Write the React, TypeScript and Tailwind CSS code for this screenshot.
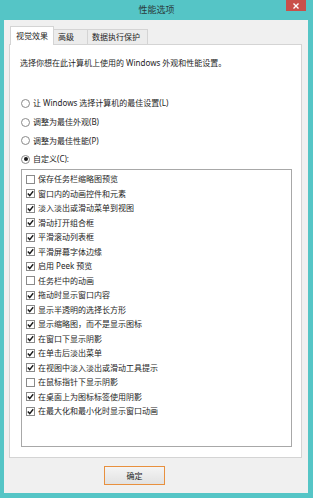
import React from "react";

const font = { fontFamily: '"Noto Sans", "Noto Sans CJK SC", sans-serif' };

const rows: [boolean, string][] = [
  [false, "保存任务栏缩略图预览"],
  [true, "窗口内的动画控件和元素"],
  [true, "淡入淡出或滑动菜单到视图"],
  [true, "滑动打开组合框"],
  [true, "平滑滚动列表框"],
  [true, "平滑屏幕字体边缘"],
  [true, "启用 Peek 预览"],
  [false, "任务栏中的动画"],
  [true, "拖动时显示窗口内容"],
  [true, "显示半透明的选择长方形"],
  [true, "显示缩略图，而不是显示图标"],
  [true, "在窗口下显示阴影"],
  [true, "在单击后淡出菜单"],
  [true, "在视图中淡入淡出或滑动工具提示"],
  [false, "在鼠标指针下显示阴影"],
  [true, "在桌面上为图标标签使用阴影"],
  [true, "在最大化和最小化时显示窗口动画"],
];

const radios: [boolean, string][] = [
  [false, "让 Windows 选择计算机的最佳设置(L)"],
  [false, "调整为最佳外观(B)"],
  [false, "调整为最佳性能(P)"],
  [true, "自定义(C):"],
];

function Check({ checked }: { checked: boolean }) {
  return (
    <div className="w-[9px] h-[9px] border border-[#8a8a8a] bg-white flex items-center justify-center shrink-0">
      {checked && (
        <svg width="7" height="7" viewBox="0 0 7 7">
          <path d="M0.8 3.6 L2.7 5.6 L6.2 1.2" fill="none" stroke="#1a1a1a" strokeWidth="1.4" />
        </svg>
      )}
    </div>
  );
}

function Radio({ checked }: { checked: boolean }) {
  return (
    <div className="w-[9px] h-[9px] rounded-full border border-[#8a8a8a] bg-white flex items-center justify-center shrink-0">
      {checked && <div className="w-[4px] h-[4px] rounded-full bg-[#1a1a1a]" />}
    </div>
  );
}

export default function App() {
  return (
    <div
      className="w-[313px] h-[498px] bg-[#55c5c6] flex flex-col text-[8px] leading-[12px] text-[#1e1e1e]"
      style={font}
    >
      <div className="h-[20px] relative flex items-center justify-center shrink-0">
        <span className="text-[9px] text-[#2a3a3a]">性能选项</span>
        <div className="absolute top-0 right-[7px] w-[20px] h-[11px] bg-[#c9504a] flex items-center justify-center">
          <svg width="6" height="6" viewBox="0 0 6 6">
            <path d="M0.5 0.5 L5.5 5.5 M5.5 0.5 L0.5 5.5" stroke="#fff" strokeWidth="1.4" />
          </svg>
        </div>
      </div>
      <div className="flex-1 ml-[4px] mr-[5px] mb-[5px] bg-[#f0f0f0] flex flex-col">
        <div className="flex items-end pl-[6px] pt-[5px] h-[24px] shrink-0">
          <div className="h-[19px] w-[44px] bg-white border border-b-0 border-[#d4d4d4] flex items-center pl-[5px] relative z-10 mb-[-1px]">
            视觉效果
          </div>
          <div className="h-[15px] w-[34px] bg-[#ececec] border border-l-0 border-b-0 border-[#d4d4d4] flex items-center pl-[4px]">
            高级
          </div>
          <div className="h-[15px] w-[60px] bg-[#ececec] border border-l-0 border-b-0 border-[#d4d4d4] flex items-center pl-[4px]">
            数据执行保护
          </div>
        </div>
        <div className="ml-[5px] mr-[6px] h-[414px] bg-white border border-[#d4d4d4] flex flex-col shrink-0">
          <div className="pl-[10px] pt-[12px]">选择你想在此计算机上使用的 Windows 外观和性能设置。</div>
          <div className="flex flex-col pl-[11px] pt-[25px]">
            {radios.map(([c, t], i) => (
              <div key={i} className="h-[18.7px] flex items-center gap-[3px]">
                <Radio checked={c} />
                <span>{t}</span>
              </div>
            ))}
          </div>
          <div className="ml-[11px] mr-[9px] mt-[0px] flex-1 mb-[10px] border border-[#a8a8a8] bg-white pt-[2px] pl-[4px]">
            {rows.map(([c, t], i) => (
              <div key={i} className="h-[14.5px] flex items-center gap-[3px]">
                <Check checked={c} />
                <span>{t}</span>
              </div>
            ))}
          </div>
        </div>
        <div className="flex-1 flex items-center pl-[100px]">
          <div className="w-[61px] h-[19px] border-[1.5px] border-[#e8903e] bg-gradient-to-b from-[#f4f4f4] to-[#e2e2e2] flex items-center justify-center">
            确定
          </div>
        </div>
      </div>
    </div>
  );
}
